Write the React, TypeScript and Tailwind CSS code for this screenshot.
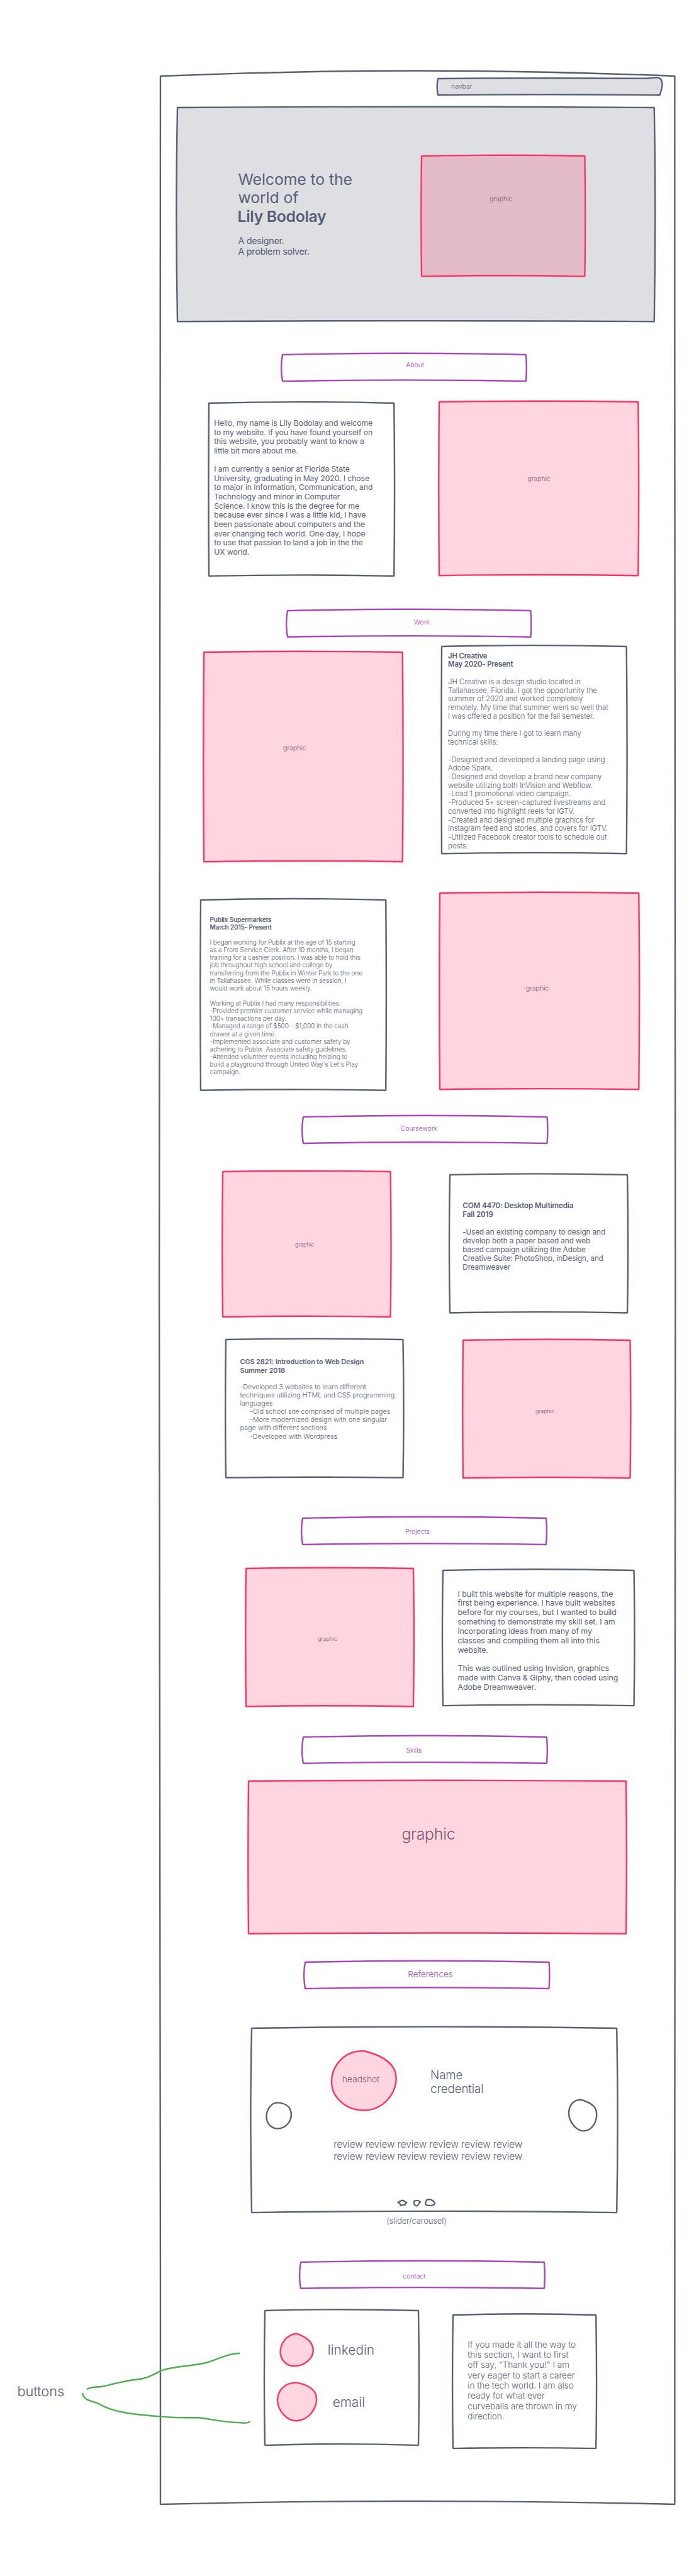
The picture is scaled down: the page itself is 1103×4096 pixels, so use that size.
import type { ReactNode } from "react";

type Bow = [top: number, right: number, bottom: number, left: number];

const TONES = {
  ink: { stroke: "#586075", fill: "none" },
  shade: { stroke: "#586075", fill: "rgba(88,96,117,0.2)" },
  pink: { stroke: "#ff3366", fill: "rgba(255,51,102,0.2)" },
  purple: { stroke: "#ab47bc", fill: "none" },
};

type Tone = keyof typeof TONES;

/** Box with a slightly bowed, hand drawn outline. */
function Sketch({
  w,
  h,
  tone = "ink",
  bow = [1.6, 1, 1.4, 1],
  path,
  className,
  children,
}: {
  w: number;
  h: number;
  tone?: Tone;
  bow?: Bow;
  path?: string;
  className: string;
  children?: ReactNode;
}) {
  const [t, r, b, l] = bow;
  const d =
    path ??
    `M0 0Q${w / 2} ${-2 * t} ${w} 0Q${w + 2 * r} ${h / 2} ${w} ${h}Q${w / 2} ${h - 2 * b} 0 ${h}Q${-2 * l} ${h / 2} 0 0Z`;
  return (
    <div className={`relative shrink-0 ${className}`}>
      <svg
        className="pointer-events-none absolute inset-0 size-full overflow-visible"
        viewBox={`0 0 ${w} ${h}`}
        preserveAspectRatio="none"
      >
        <path d={d} fill={TONES[tone].fill} stroke={TONES[tone].stroke} strokeWidth="2.4" strokeLinejoin="bevel" />
      </svg>
      <div className="relative">{children}</div>
    </div>
  );
}

const BLOBS = {
  head: "M52 0.5C20 -2 0 25 0 52C0 78 22 100 50 100C80 100 100 72 100 46C100 26 86 10 52 0.5Z",
  prev: "M46 1C20 0 1 28 1 54C2 82 22 99 46 99C76 99 99 74 99 45C98 18 78 3 46 1Z",
  next: "M42 1C12 2 0 24 0 44C1 72 28 99 53 99C82 98 100 72 99 45C98 24 84 12 42 1Z",
  linkedin: "M50 1C20 4 1 30 1 57C2 82 20 99 43 99C74 98 99 76 99 50C97 26 80 12 50 1Z",
  email: "M50 1C18 0 1 20 0 46C1 74 24 99 48 99C78 98 100 68 99 42C98 20 82 8 50 1Z",
};

/** Hand drawn circle. */
function Blob({
  shape,
  tone = "ink",
  className,
  children,
}: {
  shape: keyof typeof BLOBS;
  tone?: Tone;
  className: string;
  children?: ReactNode;
}) {
  return (
    <div className={`relative shrink-0 ${className}`}>
      <svg
        className="absolute inset-0 size-full overflow-visible"
        viewBox="0 0 100 100"
        preserveAspectRatio="none"
      >
        <path
          d={BLOBS[shape]}
          fill={TONES[tone].fill}
          stroke={TONES[tone].stroke}
          strokeWidth="2.4"
          vectorEffect="non-scaling-stroke"
        />
      </svg>
      <div className="relative">{children}</div>
    </div>
  );
}

function Heading({ w, h, className, children }: { w: number; h: number; className: string; children: ReactNode }) {
  return (
    <Sketch w={w} h={h} tone="purple" bow={[2.2, 0.9, 1.7, 1.9]} className={`text-[#ab47bc] ${className}`}>
      {children}
    </Sketch>
  );
}

function Graphic({ w, h, className, children }: { w: number; h: number; className: string; children: ReactNode }) {
  return (
    <Sketch w={w} h={h} tone="pink" bow={[1.2, 0.9, 1.2, 0.7]} className={`text-[#795772] ${className}`}>
      {children}
    </Sketch>
  );
}

function Label({ children }: { children: ReactNode }) {
  return <span className="block text-[10.6px] leading-[12.7px] font-light tracking-[-0.09px]">{children}</span>;
}

function SmallLabel({ children }: { children: ReactNode }) {
  return <span className="block text-[8.9px] leading-[10.7px] font-light tracking-[-0.07px]">{children}</span>;
}

const ABOUT = `Hello, my name is Lily Bodolay and welcome
to my website. If you have found yourself on
this website, you probably want to know a
little bit more about me.

I am currently a senior at Florida State
University, graduating in May 2020. I chose
to major in Information, Communication, and
Technology and minor in Computer
Science. I know this is the degree for me
because ever since I was a little kid, I have
been passionate about computers and the
ever changing tech world. One day, I hope
to use that passion to land a job in the the
UX world.`;

const JH = `
JH Creative is a design studio located in
Tallahassee, Florida. I got the opportunity the
summer of 2020 and worked completely
remotely. My time that summer went so well that
I was offered a position for the fall semester.

During my time there I got to learn many
technical skills:

-Designed and developed a landing page using
Adobe Spark.
-Designed and develop a brand new company
website utilizing both InVision and Webflow.
-Lead 1 promotional video campaign.
-Produced 5+ screen-captured livestreams and
converted into highlight reels for IGTV.
-Created and designed multiple graphics for
Instagram feed and stories, and covers for IGTV.
-Utilized Facebook creator tools to schedule out
posts.`;

const PUBLIX = `
I began working for Publix at the age of 15 starting
as a Front Service Clerk. After 10 months, I began
training for a cashier position. I was able to hold this
job throughout high school and college by
transferring from the Publix in Winter Park to the one
in Tallahassee. While classes were in session, I
would work about 15 hours weekly.

Working at Publix I had many responsibilities:
-Provided premier customer service while managing
100+ transactions per day.
-Managed a range of $500 - $1,000 in the cash
drawer at a given time.
-Implemented associate and customer safety by
adhering to Publix  Associate safety guidelines.
-Attended volunteer events including helping to
build a playground through United Way's Let's Play
campaign.`;

const COM = `
-Used an existing company to design and
develop both a paper based and web
based campaign utilizing the Adobe
Creative Suite: PhotoShop, inDesign, and
Dreamweaver`;

const PROJECTS = `I built this website for multiple reasons, the
first being experience. I have built websites
before for my courses, but I wanted to build
something to demonstrate my skill set. I am
incorporating ideas from many of my
classes and compiling them all into this
website.

This was outlined using Invision, graphics
made with Canva & Giphy, then coded using
Adobe Dreamweaver.`;

const CONTACT = `If you made it all the way to
this section, I want to first
off say, "Thank you!" I am
very eager to start a career
in the tech world. I am also
ready for what ever
curveballs are thrown in my
direction.`;

function Hero() {
  return (
    <Sketch
      w={757.8}
      h={340.3}
      tone="shade"
      bow={[1.3, 1.5, 1.2, 1.6]}
      className="mt-[19.3px] ml-[27.1px] h-[340.3px] w-[757.8px]"
    >
      <div className="flex items-start">
        <div className="mt-[99.6px] ml-[96.3px] w-[291.2px] whitespace-pre">
          <h1 className="text-[24.8px] leading-[29.8px] tracking-[-0.1px]">
            {"Welcome to the\nworld of\n"}
            <strong className="-ml-px font-semibold tracking-[-0.35px]">Lily Bodolay</strong>
          </h1>
          <p className="mt-[14px] text-[14.35px] leading-[17.2px] tracking-[-0.3px]">
            {"A designer.\nA problem solver."}
          </p>
        </div>
        <Graphic w={259.4} h={191.4} className="mt-[77.2px] h-[191.4px] w-[259.4px] pt-[62.9px] pl-[108.4px]">
          <Label>graphic</Label>
        </Graphic>
      </div>
    </Sketch>
  );
}

function Carousel() {
  return (
    <div className="mt-[62.4px] ml-[145.2px] w-[580.2px]">
      <Sketch w={580.2} h={293.1} bow={[2.4, 1.4, 2.2, 1.6]} className="h-[293.1px] w-[580.2px]">
        <div className="flex items-start">
          <Blob shape="prev" className="mt-[118.5px] ml-[22.6px] h-[42px] w-[40.3px]" />
          <div className="w-[441.1px]">
            <div className="mt-[36.4px] ml-[64.1px] flex h-[94.5px] items-start">
              <Blob shape="head" tone="pink" className="h-[94.5px] w-[102.6px] pt-[37.1px] pl-[16.8px] text-[#795772]">
                <span className="block text-[13.75px] leading-[16.5px] font-light tracking-[-0.06px]">headshot</span>
              </Blob>
              <p className="mt-[27.6px] ml-[54.2px] text-[18.7px] leading-[22.5px] font-light tracking-[-0.08px] whitespace-pre">
                {"Name\ncredential"}
              </p>
            </div>
            <p className="mt-[45.8px] ml-[67px] text-[15.33px] leading-[18.4px] font-light tracking-[-0.09px] whitespace-pre">
              {"review review review review review review\nreview review review review review review"}
            </p>
            <svg
              className="mt-[57.3px] ml-[168px] h-[15.8px] w-[63.3px]"
              viewBox="40 50 320 80"
              fill="none"
              stroke="#586075"
              strokeWidth="11.5"
              strokeLinejoin="round"
            >
              <path d="M82 68Q100 74 118 87Q106 94 103 106Q85 104 69 111Q68 98 62 94Q54 90 47 86Q62 72 82 68Z" />
              <path d="M200 70Q182 68 177 78Q172 90 182 106Q195 120 208 107Q212 94 228 82Q216 70 200 70Z" />
              <path d="M307 62Q285 60 277 65Q275 80 268 92Q268 108 290 110L318 110Q343 105 343 90Q335 70 307 62Z" />
            </svg>
          </div>
          <Blob shape="next" className="mt-[113.2px] h-[50.9px] w-[44.7px]" />
        </div>
      </Sketch>
      <p className="mt-[6.1px] ml-[213.9px] text-[13px] leading-[15.6px] font-light tracking-[-0.13px]">
        (slider/carousel)
      </p>
    </div>
  );
}

function ButtonsNote() {
  return (
    <div className="absolute top-[3738px] left-[27.4px] flex items-start">
      <span className="mt-[51.3px] w-[100.6px] text-[21.8px] leading-[26.2px] font-light tracking-[-0.08px]">
        buttons
      </span>
      <svg
        className="h-[120px] w-[275px] overflow-visible"
        viewBox="128 3738 275 120"
        fill="none"
        stroke="#4caf50"
        strokeWidth="2.4"
      >
        <path d="M138 3799.5C143 3794.6 154 3796.3 162.4 3794.7C183 3790 202 3785 216 3783.8C236 3782.5 246 3773.5 259.2 3768.5C279 3761.8 306 3763 330.7 3756C350 3750 364 3741.8 381 3742" />
        <path d="M131.2 3805.2C132 3817 147 3817.5 157.1 3822.2C181 3836.5 215 3839.3 255.2 3842.4C282 3845.3 299 3843.8 314.8 3844.3C335 3845.8 345 3851 389 3852.7C394 3852.6 396.4 3852 397 3849.7" />
      </svg>
    </div>
  );
}

export default function App() {
  return (
    <div className="relative h-[4096px] w-[1103px] overflow-hidden bg-white pt-[121.4px] pl-[255.1px] font-['Inter',sans-serif] text-[#586075]">
      <Sketch
        w={817.4}
        h={3861}
        path="M0 0Q408 -17 817.4 0C817 600 818.2 1000 818.4 1930C818.2 2900 817 3200 817.4 3861Q390 3851 0 3861C0.5 3300 -1.9 2900 -1.9 1930C-1.9 1000 0 600 0 0Z"
        className="h-[3861px] w-[817.4px]"
      >
        <div className="flex flex-col items-start">
          <Sketch
            w={352.7}
            h={26.2}
            tone="shade"
            path="M0 0Q170 -1.4 330.6 -0.2C338 -0.6 343 -2.4 349 -1.7C355 -0.5 356.8 5 356.6 10Q356 16 352.7 26.2Q176 24.4 0 26.2Q-2.6 13 0 0Z"
            className="mt-[4.1px] ml-[441.1px] h-[26.2px] w-[352.7px] pt-[6.1px] pl-[20.8px]"
          >
            <Label>navbar</Label>
          </Sketch>

          <Hero />

          <Heading w={386.9} h={42.1} className="mt-[53px] ml-[193.8px] h-[42.1px] w-[386.9px] pt-[11px] pl-[196.3px]">
            <Label>About</Label>
          </Heading>
          <div className="mt-[32.4px] ml-[77.3px] flex h-[277px] items-start">
            <Sketch w={294.2} h={274.9} bow={[1.9, 0.9, 1.5, 0.5]} className="mt-[2.1px] h-[274.9px] w-[294.2px] pt-[25px] pl-[7.8px]">
              <p className="text-[12.2px] leading-[14.66px] tracking-[-0.075px] whitespace-pre">{ABOUT}</p>
            </Sketch>
            <Graphic w={316.3} h={276.2} className="ml-[71.8px] h-[276.2px] w-[316.3px] pt-[116.8px] pl-[140.2px]">
              <Label>graphic</Label>
            </Graphic>
          </div>

          <Heading w={386.4} h={41.8} className="mt-[54.8px] ml-[202.1px] h-[41.8px] w-[386.4px] pt-[13.9px] pl-[200.7px]">
            <Label>Work</Label>
          </Heading>
          <div className="mt-[15.7px] ml-[68.5px] flex h-[342.6px] items-start">
            <Graphic w={315.7} h={333.2} className="mt-[9.4px] h-[333.2px] w-[315.7px] pt-[146.3px] pl-[126.4px]">
              <Label>graphic</Label>
            </Graphic>
            <Sketch w={293.7} h={329.3} bow={[1.9, 0.9, 1.4, 0.5]} className="ml-[62.4px] h-[329.3px] w-[293.7px] pt-[8.7px] pl-[10.4px]">
              <div className="text-[11.44px] leading-[13.73px] whitespace-pre">
                <h2 className="font-semibold tracking-[-0.2px]">{"JH Creative\nMay 2020- Present"}</h2>
                <p className="font-light tracking-[-0.05px]">{JH}</p>
              </div>
            </Sketch>
          </div>
          <div className="mt-[49.8px] ml-[63.5px] flex h-[312.8px] items-start">
            <Sketch w={294.2} h={302.7} bow={[2, 0.7, 1.4, 0.7]} className="mt-[10.1px] h-[302.7px] w-[294.2px] pt-[25px] pl-[14.9px]">
              <div className="text-[10.12px] leading-[12.145px] whitespace-pre">
                <h2 className="font-semibold tracking-[-0.2px]">{"Publix Supermarkets\nMarch 2015- Present"}</h2>
                <p className="font-light tracking-[-0.07px]">{PUBLIX}</p>
              </div>
            </Sketch>
            <Graphic w={316.3} h={312.3} className="ml-[86.7px] h-[312.3px] w-[316.3px] pt-[145.8px] pl-[136.4px]">
              <Label>graphic</Label>
            </Graphic>
          </div>

          <Heading w={387.5} h={42} className="mt-[43.2px] ml-[226.9px] h-[42px] w-[387.5px] pt-[12.5px] pl-[154.6px]">
            <Label>Coursework</Label>
          </Heading>
          <div className="mt-[44.5px] ml-[99.4px] flex h-[231px] items-start">
            <Graphic w={266.6} h={231} className="h-[231px] w-[266.6px] pt-[110.9px] pl-[114.4px]">
              <SmallLabel>graphic</SmallLabel>
            </Graphic>
            <Sketch w={282.1} h={219.5} className="mt-[4.9px] ml-[93.8px] h-[219.5px] w-[282.1px] pt-[42px] pl-[20.4px]">
              <div className="text-[11.7px] leading-[14.04px] whitespace-pre">
                <h2 className="font-semibold tracking-[-0.16px]">{"COM 4470: Desktop Multimedia\nFall 2019"}</h2>
                <p className="tracking-[-0.07px]">{COM}</p>
              </div>
            </Sketch>
          </div>
          <div className="mt-[35.9px] ml-[103.8px] flex h-[220.6px] items-start">
            <Sketch w={281.5} h={219.5} bow={[1.4, 1, 0.8, 0.8]} className="h-[219.5px] w-[281.5px] pt-[29.6px] pl-[22.6px]">
              <div className="text-[10.93px] leading-[13.12px] whitespace-pre">
                <h2 className="font-semibold tracking-[-0.115px]">
                  {"CGS 2821: Introduction to Web Design\nSummer 2018"}
                </h2>
                <div className="font-light tracking-[-0.09px]">
                  <p>{"\n-Developed 3 websites to learn different\ntechniques utilizing HTML and CSS programming\nlanguages"}</p>
                  <p className="indent-[15.4px]">-Old school site comprised of multiple pages</p>
                  <p className="indent-[15.4px]">{"-More modernized design with one singular\npage with different sections"}</p>
                  <p className="indent-[15.4px]">-Developed with Wordpress</p>
                </div>
              </div>
            </Sketch>
            <Graphic w={265.5} h={219.2} className="mt-[1.4px] ml-[96.1px] h-[219.2px] w-[265.5px] pt-[107.4px] pl-[114.4px]">
              <SmallLabel>graphic</SmallLabel>
            </Graphic>
          </div>

          <Heading w={387} h={42} className="mt-[63.4px] ml-[225.8px] h-[42px] w-[387px] pt-[16.5px] pl-[163px]">
            <Label>Projects</Label>
          </Heading>
          <div className="mt-[38.2px] ml-[136.4px] flex h-[219.5px] items-start">
            <Graphic w={266} h={219.5} className="h-[219.5px] w-[266px] pt-[107.3px] pl-[113.8px]">
              <SmallLabel>graphic</SmallLabel>
            </Graphic>
            <Sketch w={303.6} h={215.1} bow={[1.8, 0.9, 1.5, 1]} className="mt-[3.3px] ml-[46.4px] h-[215.1px] w-[303.6px] pt-[30.3px] pl-[23.6px]">
              <p className="text-[12.38px] leading-[14.86px] tracking-[-0.07px] whitespace-pre">{PROJECTS}</p>
            </Sketch>
          </div>

          <Heading w={386.9} h={41.8} className="mt-[48.5px] ml-[226.9px] h-[41.8px] w-[386.9px] pt-[16.3px] pl-[163.4px]">
            <Label>Skills</Label>
          </Heading>
          <Graphic w={600} h={242.7} className="mt-[28.5px] ml-[139.7px] h-[242.7px] w-[600px] pt-[69.3px] pl-[243.6px]">
            <span className="block text-[24.8px] leading-[29.8px] font-light tracking-[-0.25px]">graphic</span>
          </Graphic>

          <Heading w={387.5} h={42} className="mt-[45.2px] ml-[230.2px] h-[42px] w-[387.5px] pt-[11.3px] pl-[163px]">
            <span className="block text-[13.75px] leading-[16.5px] font-light tracking-[-0.08px]">References</span>
          </Heading>
          <Carousel />

          <Heading w={386.9} h={41.8} className="mt-[58.1px] ml-[222.5px] h-[41.8px] w-[386.9px] pt-[16.3px] pl-[162.8px]">
            <Label>contact</Label>
          </Heading>
          <div className="mt-[35.1px] ml-[166.3px] flex h-[218.7px] items-start">
            <Sketch w={244} h={214.1} bow={[1.8, 1, 2, 1]} className="h-[214.1px] w-[244px]">
              <div className="flex flex-col text-[20.8px] leading-[25px] font-light tracking-[0px]">
                <div className="mt-[35.7px] ml-[23.9px] flex items-start">
                  <Blob shape="linkedin" tone="pink" className="h-[52.9px] w-[53.4px]" />
                  <span className="mt-[13.6px] ml-[22.2px]">linkedin</span>
                </div>
                <div className="mt-[25.6px] ml-[19.6px] flex items-start">
                  <Blob shape="email" tone="pink" className="h-[61.9px] w-[62.7px]" />
                  <span className="mt-[18.9px] ml-[25px]">email</span>
                </div>
              </div>
            </Sketch>
            <Sketch w={227.2} h={212.1} bow={[1.7, 0.9, 1, 0.9]} className="mt-[6.6px] ml-[54.9px] h-[212.1px] w-[227.2px] pt-[38.7px] pl-[23px]">
              <p className="text-[13.63px] leading-[16.36px] font-light tracking-[-0.04px] whitespace-pre">{CONTACT}</p>
            </Sketch>
          </div>
        </div>
      </Sketch>
      <ButtonsNote />
    </div>
  );
}
